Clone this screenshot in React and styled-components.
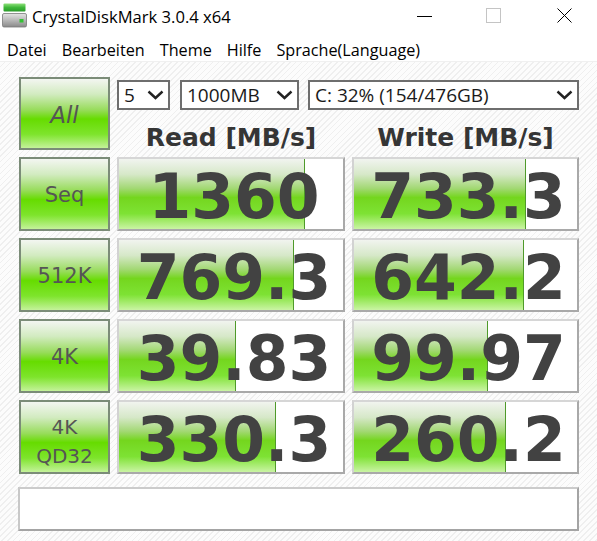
import React from "react";
import styled, { createGlobalStyle } from "styled-components";

const Global = createGlobalStyle`
  html, body { margin: 0; padding: 0; }
  body {
    width: 597px;
    height: 541px;
    overflow: hidden;
    font-family: "Open Sans", "DejaVu Sans", sans-serif;
    background: #ffffff;
  }
`;

const Window = styled.div`
  width: 597px;
  height: 541px;
  display: flex;
  flex-direction: column;
  overflow: hidden;
`;

const TitleBar = styled.div`
  height: 31px;
  display: flex;
  align-items: center;
  background: #ffffff;
`;

const AppIcon = styled.svg`
  width: 25px;
  height: 25px;
  margin-left: 2px;
  margin-right: 5px;
  flex: none;
`;

const TitleText = styled.div`
  font-family: "Open Sans", sans-serif;
  font-size: 16.6px;
  color: #000;
  flex: 1;
  padding-top: 1px;
`;

const Controls = styled.div`
  display: flex;
  height: 31px;
`;

const CtrlButton = styled.div`
  width: ${(p) => p.$w || 69}px;
  margin-left: ${(p) => p.$ml || 0}px;
  height: 31px;
  display: flex;
  align-items: center;
  justify-content: center;
`;

const MenuBar = styled.div`
  height: 30px;
  display: flex;
  align-items: center;
  gap: 15px;
  padding-left: 7px;
  background: #ffffff;
  border-bottom: 1px solid #f0f0f0;
`;

const MenuItem = styled.div`
  font-family: "Open Sans", sans-serif;
  font-size: 16.2px;
  color: #000;
  padding-top: 7px;
`;

const Body = styled.div`
  flex: 1;
  background: repeating-linear-gradient(
    135deg,
    #fcfcfc 0px,
    #fcfcfc 3px,
    #efefef 3px,
    #efefef 4.2px
  );
  padding: 15px 18px 0 19px;
`;

const Grid = styled.div`
  display: grid;
  grid-template-columns: 91px 228px 227px;
  grid-template-rows: 73px 74px 74px 74px 74px;
  column-gap: 7px;
  row-gap: 7px;
`;

const TestButton = styled.div`
  box-sizing: border-box;
  border: 2px solid #7b8c78;
  background: linear-gradient(
    to bottom,
    #f3f6f1 0%,
    #d2ebc0 22%,
    #97dc5a 45%,
    #66dc00 58%,
    #7ee42c 80%,
    #c4f29a 100%
  );
  display: flex;
  flex-direction: column;
  align-items: center;
  justify-content: center;
  padding-top: ${(p) => p.$pt || 4}px;
  color: #555555;
  font-family: "DejaVu Sans", sans-serif;
  font-size: ${(p) => p.$size || 21}px;
  font-style: ${(p) => (p.$italic ? "oblique" : "normal")};
  line-height: ${(p) => p.$lh || 1.2};
  text-align: center;
`;

const TopPanel = styled.div`
  grid-column: 2 / span 2;
  display: flex;
  flex-direction: column;
  padding-top: 3px;
`;

const SelectRow = styled.div`
  display: flex;
  height: 30px;
`;

const Select = styled.div`
  box-sizing: border-box;
  width: ${(p) => p.$w}px;
  margin-right: ${(p) => p.$mr || 0}px;
  height: 30px;
  border: 2px solid #6e6e6e;
  background: #ffffff;
  display: flex;
  align-items: center;
  justify-content: space-between;
  padding: 0 4px 0 5px;
  font-family: "Open Sans", sans-serif;
  font-size: 19px;
  color: #1a1a1a;
  white-space: nowrap;
`;

const Chevron = () => (
  <svg width="17" height="10" viewBox="0 0 17 10" style={{ flex: "none" }}>
    <path d="M1.5 1.5 L8.5 8 L15.5 1.5" fill="none" stroke="#222" strokeWidth="2.4" />
  </svg>
);

const HeaderRow = styled.div`
  display: grid;
  grid-template-columns: 228px 227px;
  column-gap: 7px;
  margin-top: 13px;
`;

const Header = styled.div`
  font-family: "DejaVu Sans", sans-serif;
  font-weight: bold;
  font-size: 25px;
  line-height: 30px;
  color: #353535;
  text-align: center;
`;

const Cell = styled.div`
  position: relative;
  box-sizing: border-box;
  background: #ffffff;
  border-style: solid;
  border-width: 2px;
  border-color: #d6d6d6 #a9a9a9 #a9a9a9 #d2d2d2;
  display: flex;
  align-items: center;
  justify-content: center;
`;

const Fill = styled.div`
  position: absolute;
  left: 0;
  top: 0;
  bottom: 0;
  background: linear-gradient(
    to bottom,
    #f1f4ef 0%,
    #d6e8c8 22%,
    #a2d873 42%,
    #74d61e 55%,
    #7ee234 78%,
    #caf4a4 100%
  );
  border-right: 1px solid #4f9a2a;
`;

const Value = styled.div`
  position: relative;
  font-family: "DejaVu Sans", sans-serif;
  font-weight: bold;
  font-size: 61.5px;
  line-height: 70px;
  height: 70px;
  margin-top: 5px;
  color: #424242;
  padding-left: 6px;
  white-space: nowrap;
`;

const Footer = styled.div`
  grid-column: 1 / -1;
  margin-top: 6px;
  margin-left: -1px;
  height: 44px;
  box-sizing: border-box;
  background: #ffffff;
  border-style: solid;
  border-width: 2px;
  border-color: #cbcbcb #a4a4a4 #a4a4a4 #c8c8c8;
`;

const rows = [
  { label: ["Seq"], read: "1360", rf: 185, write: "733.3", wf: 171 },
  { label: ["512K"], read: "769.3", rf: 174, write: "642.2", wf: 169 },
  { label: ["4K"], read: "39.83", rf: 116, write: "99.97", wf: 133 },
  { label: ["4K", "QD32"], read: "330.3", rf: 156, write: "260.2", wf: 151 },
];

function ResultCell({ value, fill }) {
  return (
    <Cell>
      <Fill style={{ width: fill }} />
      <Value>{value}</Value>
    </Cell>
  );
}

export default function App() {
  return (
    <Window>
      <Global />
      <TitleBar>
        <AppIcon viewBox="0 0 25 25">
          <defs>
            <linearGradient id="gtop" x1="0" y1="0" x2="0" y2="1">
              <stop offset="0" stopColor="#8ee07a" />
              <stop offset="0.5" stopColor="#3fb83a" />
              <stop offset="1" stopColor="#2a9a2a" />
            </linearGradient>
            <linearGradient id="gbody" x1="0" y1="0" x2="0" y2="1">
              <stop offset="0" stopColor="#e4e4e4" />
              <stop offset="0.5" stopColor="#b8b8b8" />
              <stop offset="1" stopColor="#8a8a8a" />
            </linearGradient>
          </defs>
          <rect x="1.5" y="0.5" width="22" height="8" rx="1" fill="url(#gtop)" />
          <rect x="0.5" y="10.5" width="24" height="13.5" rx="1.5" fill="url(#gbody)" stroke="#7a7a7a" strokeWidth="0.8" />
          <rect x="17.5" y="16" width="4" height="3.5" fill="#35c235" />
        </AppIcon>
        <TitleText>CrystalDiskMark 3.0.4 x64</TitleText>
        <Controls>
          <CtrlButton>
            <svg width="15" height="15" viewBox="0 0 15 15">
              <line x1="0" y1="8.5" x2="15" y2="8.5" stroke="#000" strokeWidth="1" />
            </svg>
          </CtrlButton>
          <CtrlButton>
            <svg width="15" height="15" viewBox="0 0 15 15">
              <rect x="0.5" y="0.5" width="14" height="14" fill="none" stroke="#c4c4c4" strokeWidth="1" />
            </svg>
          </CtrlButton>
          <CtrlButton $w={66} $ml={3}>
            <svg width="15" height="15" viewBox="0 0 15 15">
              <path d="M0.5 0.5 L14.5 14.5 M14.5 0.5 L0.5 14.5" stroke="#000" strokeWidth="1" />
            </svg>
          </CtrlButton>
        </Controls>
      </TitleBar>
      <MenuBar>
        <MenuItem>Datei</MenuItem>
        <MenuItem>Bearbeiten</MenuItem>
        <MenuItem>Theme</MenuItem>
        <MenuItem>Hilfe</MenuItem>
        <MenuItem>Sprache(Language)</MenuItem>
      </MenuBar>
      <Body>
        <Grid>
          <TestButton $size={23} $italic>All</TestButton>
          <TopPanel>
            <SelectRow>
              <Select $w={53} $mr={10}>
                <span>5</span>
                <Chevron />
              </Select>
              <Select $w={119} $mr={9}>
                <span>1000MB</span>
                <Chevron />
              </Select>
              <Select $w={271}>
                <span>C: 32% (154/476GB)</span>
                <Chevron />
              </Select>
            </SelectRow>
            <HeaderRow>
              <Header>Read [MB/s]</Header>
              <Header>Write [MB/s]</Header>
            </HeaderRow>
          </TopPanel>
          {rows.map((r) => (
            <React.Fragment key={r.label.join("-")}>
              <TestButton
                $size={r.label.length > 1 ? 20 : 21}
                $lh={r.label.length > 1 ? 1.45 : 1.2}
                $pt={r.label.length > 1 ? 10 : 4}
              >
                {r.label.map((l) => (
                  <span key={l}>{l}</span>
                ))}
              </TestButton>
              <ResultCell value={r.read} fill={r.rf} />
              <ResultCell value={r.write} fill={r.wf} />
            </React.Fragment>
          ))}
          <Footer />
        </Grid>
      </Body>
    </Window>
  );
}
